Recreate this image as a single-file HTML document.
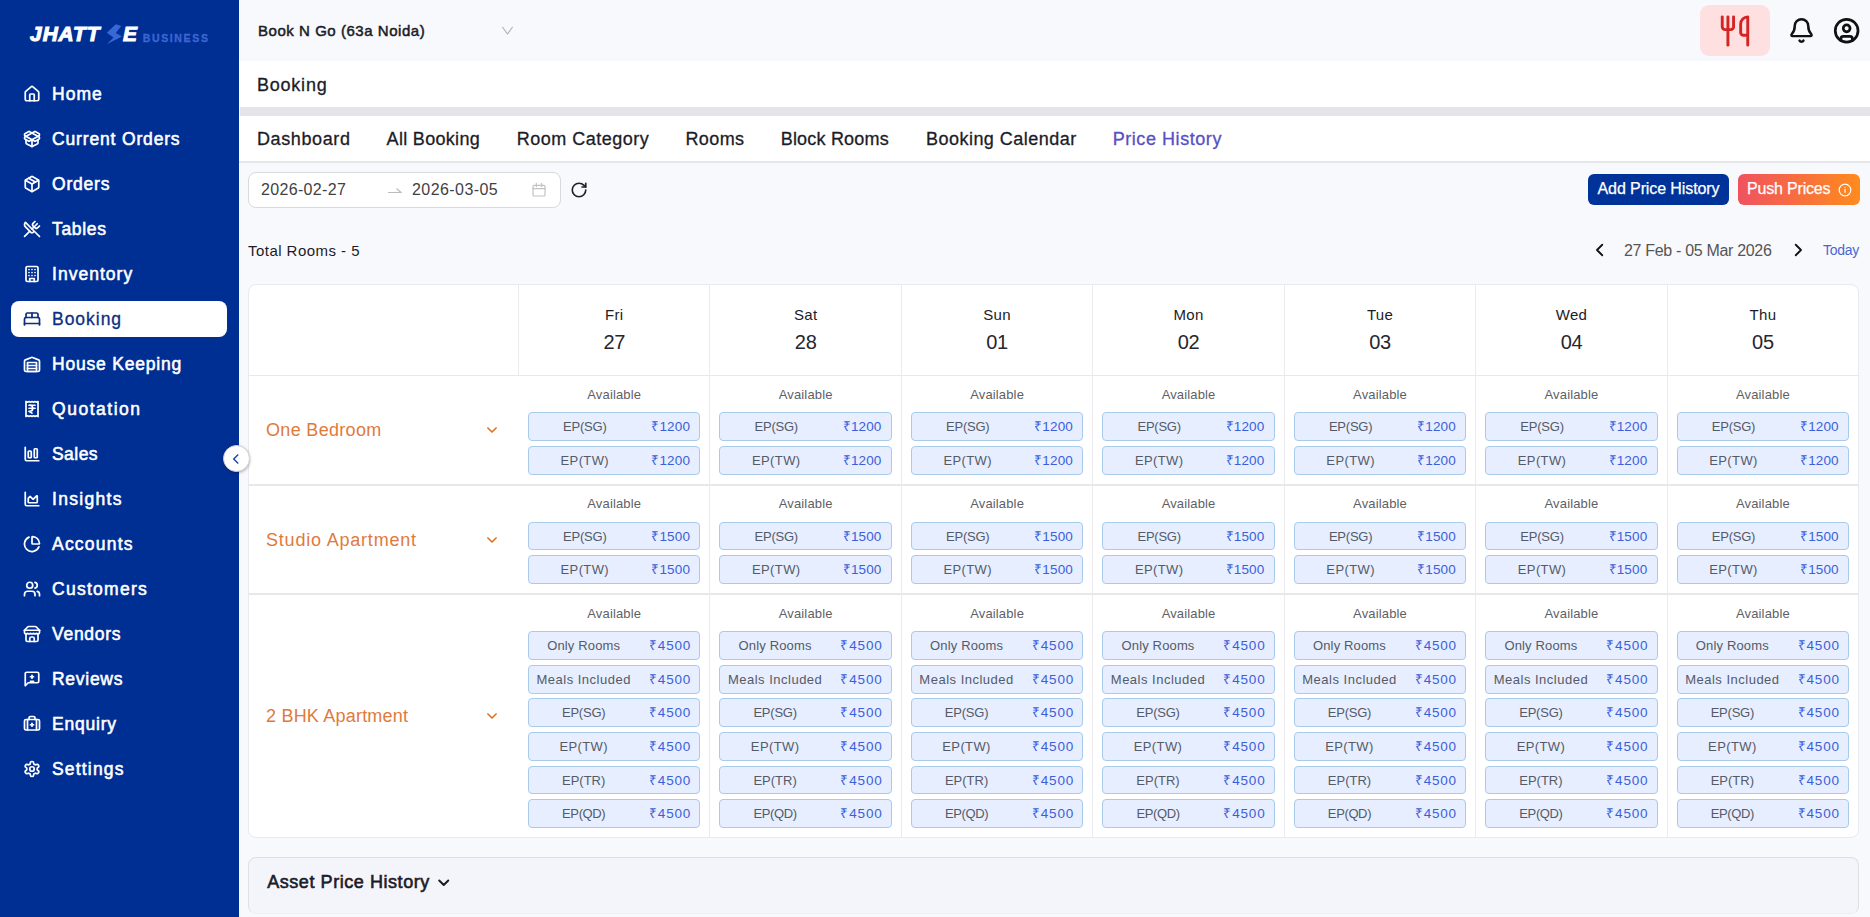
<!DOCTYPE html>
<html lang="en">
<head>
<meta charset="utf-8">
<title>Booking - Price History</title>
<style>
*{box-sizing:border-box;margin:0;padding:0}
html,body{width:1870px;height:917px;overflow:hidden}
body{font-family:"Liberation Sans",sans-serif;background:#f8f9fd;color:#1c1c28;position:relative}
#side{position:absolute;left:0;top:0;width:239px;height:917px;background:#002f94}
#logo{position:absolute;left:30.100px;top:21.700px;height:28px;white-space:nowrap}
#logo .bolt{position:absolute;left:74.900px;top:1.300px}
#logo .e{position:absolute;left:92.900px;top:0}
#logo .j{font-style:italic;font-weight:700;font-size:20.800px;color:#fff;display:inline-block;-webkit-text-stroke:1.100px #fff}
#logo .b{position:absolute;left:112.600px;top:10px;font-weight:700;font-size:10.500px;color:#3c66d4;letter-spacing:1.650px;-webkit-text-stroke:.3px #3c66d4}
.nav{position:absolute;left:11px;width:216px;height:36px;border-radius:8px;color:#fff;font-weight:400;-webkit-text-stroke:.55px #fff;font-size:17.500px;display:flex;align-items:center;padding-left:11.500px}
.nav .ic{flex:none;margin-right:11.500px;position:relative;top:0}
.nav span{position:relative;top:.500px;white-space:nowrap}
.nav.active{background:#fff;color:#0c2e80;-webkit-text-stroke:.3px #0c2e80}
#collapse{position:absolute;left:222.700px;top:445.300px;width:27px;height:27px;border-radius:50%;background:#fff;border:1px solid #d0d0d4;box-shadow:0 1px 3px rgba(0,0,0,.3);z-index:5;display:flex;align-items:center;justify-content:center;color:#1f48b0}
#main{position:absolute;left:239px;top:0;width:1631px;height:917px}
#top{position:absolute;left:0;top:0;width:1631px;height:61px}
#store{position:absolute;left:19px;top:21.500px;font-size:15px;font-weight:400;-webkit-text-stroke:.5px #1c1c28;color:#1c1c28}
#title{position:absolute;left:0;top:61px;width:1631px;height:46px;background:#fff}
#title span{position:absolute;left:18px;top:14px;font-size:18px;color:#1c1c28;-webkit-text-stroke:.3px #1c1c28}
#gbar{position:absolute;left:1px;top:107px;width:1630px;height:9px;background:#e4e5e9}
#tabs{position:absolute;left:0;top:116px;width:1631px;height:47px;background:#fff;border-bottom:2px solid #e6e7eb}
.tab{position:absolute;top:13px;font-size:18px;color:#1c1c28;white-space:nowrap;-webkit-text-stroke:.3px #1c1c28}
.tab.act{color:#5750c4;-webkit-text-stroke:.3px #5750c4}
#dp{position:absolute;left:9px;top:172px;width:313px;height:36px;border:1px solid #d9d9d9;border-radius:8px;background:#fff;font-size:16px;color:#3f3f44}
#dp .d{position:absolute;top:8px}
#dp i{font-style:normal}
.btn{position:absolute;top:174px;height:31px;border-radius:6px;color:#fff;font-size:16px;line-height:30.500px;-webkit-text-stroke:.25px #fff;text-align:center;white-space:nowrap}
#tbl{position:absolute;left:9px;top:284px;width:1611px;height:554px;background:#fff;border:1px solid #e9e9ef;border-radius:8px;overflow:hidden}
.hl{position:absolute;left:0;width:1609px;background:#e8e8eb}
.vl{position:absolute;width:1px;background:#ebebef}
.hd{position:absolute;top:0;width:190.450px;height:90px;text-align:center;color:#1c1c28}
.dn{margin-top:20.700px;font-size:15px;line-height:18px}
.dd{margin-top:6.300px;font-size:20px;line-height:24px;color:#26262f}
.rname{position:absolute;left:0;width:269px;height:24px;line-height:24px;color:#df7a3c;font-size:18px;padding-left:17px;white-space:nowrap}
.rname svg{position:absolute;left:236px;top:5px}
.cell{position:absolute;width:190.450px;height:0}
.av{position:absolute;left:0;width:190.450px;top:-25.300px;text-align:center;font-size:13px;color:#5f5f66;line-height:16px}
.pill{position:absolute;left:9px;width:172.450px;height:28.800px;border:1px solid #a9cbea;border-radius:4px;background:#e6eeff;display:flex;padding-right:9.500px;font-size:13px;line-height:27.800px;white-space:nowrap}
.pl{flex:1;text-align:center;color:#555a67;margin-right:10.700px}
.pr{flex:none;color:#3b5fdb;font-size:13.500px}
#asset{position:absolute;left:9px;top:857px;width:1611px;height:57px;border:1px solid #dfdfe4;border-bottom-color:#eeeff4;border-radius:8px;background:#f4f5fb}
#asset span{position:absolute;left:18.200px;top:14.300px;font-size:18px;font-weight:400;-webkit-text-stroke:.6px #1c1c28;color:#1c1c28}
</style>
</head>
<body>
<div id="side">
<div id="logo"><span class="j" style="letter-spacing:0.97px">JHATT</span><svg class="bolt" width="18" height="22" viewBox="105 23 18 22"><polygon points="115.800,24.200 121.200,26 115.800,33 121.900,36.500 106.800,44.200 113.500,37.600 106.800,32.800" fill="#3868d8"/></svg><span class="j e">E</span><span class="b">BUSINESS</span></div>
<div class="nav" style="top:76px"><svg class="ic" width="18" height="18" viewBox="0 0 24 24" fill="none" stroke="currentColor" stroke-width="2.3" stroke-linecap="round" stroke-linejoin="round"><path d="M15 21v-8a1 1 0 0 0-1-1h-4a1 1 0 0 0-1 1v8"/><path d="M3 10a2 2 0 0 1 .709-1.528l7-5.999a2 2 0 0 1 2.582 0l7 5.999A2 2 0 0 1 21 10v9a2 2 0 0 1-2 2H5a2 2 0 0 1-2-2z"/></svg><span style="letter-spacing:1.02px">Home</span></div>
<div class="nav" style="top:121px"><svg class="ic" width="18" height="18" viewBox="0 0 24 24" fill="none" stroke="currentColor" stroke-width="2.3" stroke-linecap="round" stroke-linejoin="round"><path d="M12 22v-9"/><path d="M15.170 2.210a1.670 1.670 0 0 1 1.630 0L21 4.570a1.930 1.930 0 0 1 0 3.360L8.820 14.790a1.655 1.655 0 0 1-1.640 0L3 12.430a1.930 1.930 0 0 1 0-3.360z"/><path d="M20 13v3.870a2.060 2.060 0 0 1-1.110 1.830l-6 3.080a1.930 1.930 0 0 1-1.780 0l-6-3.080A2.060 2.060 0 0 1 4 16.870V13"/><path d="M21 12.430a1.930 1.930 0 0 0 0-3.360L8.830 2.200a1.640 1.640 0 0 0-1.630 0L3 4.570a1.930 1.930 0 0 0 0 3.360l12.180 6.860a1.636 1.636 0 0 0 1.630 0z"/></svg><span style="letter-spacing:0.84px">Current Orders</span></div>
<div class="nav" style="top:166px"><svg class="ic" width="18" height="18" viewBox="0 0 24 24" fill="none" stroke="currentColor" stroke-width="2.3" stroke-linecap="round" stroke-linejoin="round"><path d="M21 8a2 2 0 0 0-1-1.730l-7-4a2 2 0 0 0-2 0l-7 4A2 2 0 0 0 3 8v8a2 2 0 0 0 1 1.730l7 4a2 2 0 0 0 2 0l7-4A2 2 0 0 0 21 16Z"/><path d="m3.3 7 8.700 5 8.700-5"/><path d="M12 22V12"/><path d="m7.500 4.270 9 5.150"/></svg><span style="letter-spacing:0.79px">Orders</span></div>
<div class="nav" style="top:211px"><svg class="ic" width="18" height="18" viewBox="0 0 24 24" fill="none" stroke="currentColor" stroke-width="2.3" stroke-linecap="round" stroke-linejoin="round"><path d="m16 2-2.300 2.300a3 3 0 0 0 0 4.200l1.800 1.800a3 3 0 0 0 4.200 0L22 8"/><path d="M15 15 3.300 3.300a4.200 4.200 0 0 0 0 6l7.300 7.300c.700.700 2 .700 2.800 0L15 15Zm0 0 7 7"/><path d="m2.100 21.800 6.400-6.300"/><path d="m19 5-7 7"/></svg><span style="letter-spacing:0.67px">Tables</span></div>
<div class="nav" style="top:256px"><svg class="ic" width="18" height="18" viewBox="0 0 24 24" fill="none" stroke="currentColor" stroke-width="2.3" stroke-linecap="round" stroke-linejoin="round"><rect x="4" y="2" width="16" height="20" rx="2"/><path d="M9 22v-4h6v4"/><path d="M8 6h.01M16 6h.01M12 6h.01M12 10h.01M12 14h.01M16 10h.01M16 14h.01M8 10h.01M8 14h.01"/></svg><span style="letter-spacing:1.03px">Inventory</span></div>
<div class="nav active" style="top:301px"><svg class="ic" width="18" height="18" viewBox="0 0 24 24" fill="none" stroke="currentColor" stroke-width="2.3" stroke-linecap="round" stroke-linejoin="round"><path d="M2 20v-8a2 2 0 0 1 2-2h16a2 2 0 0 1 2 2v8"/><path d="M4 10V6a2 2 0 0 1 2-2h12a2 2 0 0 1 2 2v4"/><path d="M12 4v6"/><path d="M2 18h20"/></svg><span style="letter-spacing:0.97px">Booking</span></div>
<div class="nav" style="top:346px"><svg class="ic" width="18" height="18" viewBox="0 0 24 24" fill="none" stroke="currentColor" stroke-width="2.3" stroke-linecap="round" stroke-linejoin="round"><path d="M22 8.350V20a2 2 0 0 1-2 2H4a2 2 0 0 1-2-2V8.350A2 2 0 0 1 3.260 6.500l8-3.200a2 2 0 0 1 1.480 0l8 3.200A2 2 0 0 1 22 8.350Z"/><path d="M6 18h12"/><path d="M6 14h12"/><rect x="6" y="10" width="12" height="12"/></svg><span style="letter-spacing:0.79px">House Keeping</span></div>
<div class="nav" style="top:391px"><svg class="ic" width="18" height="18" viewBox="0 0 24 24" fill="none" stroke="currentColor" stroke-width="2.3" stroke-linecap="round" stroke-linejoin="round"><path d="M4 2v20l2-1 2 1 2-1 2 1 2-1 2 1 2-1 2 1V2l-2 1-2-1-2 1-2-1-2 1-2-1-2 1Z"/><path d="M8 7h8"/><path d="M12 17.500 8 15h1a4 4 0 0 0 0-8"/><path d="M8 11h8"/></svg><span style="letter-spacing:1.52px">Quotation</span></div>
<div class="nav" style="top:436px"><svg class="ic" width="18" height="18" viewBox="0 0 24 24" fill="none" stroke="currentColor" stroke-width="2.3" stroke-linecap="round" stroke-linejoin="round"><path d="M3 3v16a2 2 0 0 0 2 2h16"/><rect x="15" y="5" width="4" height="12" rx="1"/><rect x="7" y="8" width="4" height="9" rx="1"/></svg><span style="letter-spacing:0.45px">Sales</span></div>
<div class="nav" style="top:481px"><svg class="ic" width="18" height="18" viewBox="0 0 24 24" fill="none" stroke="currentColor" stroke-width="2.3" stroke-linecap="round" stroke-linejoin="round"><path d="M3 3v16a2 2 0 0 0 2 2h16"/><path d="M7 11.200a.5.500 0 0 1 .150-.350l2-2a.5.500 0 0 1 .700 0l3.300 3.300a.5.500 0 0 0 .700 0l4.300-4.300a.5.500 0 0 1 .850.350V16a1 1 0 0 1-1 1H8a1 1 0 0 1-1-1z"/></svg><span style="letter-spacing:1.31px">Insights</span></div>
<div class="nav" style="top:526px"><svg class="ic" width="18" height="18" viewBox="0 0 24 24" fill="none" stroke="currentColor" stroke-width="2.3" stroke-linecap="round" stroke-linejoin="round"><path d="M21 12c.550 0 1-.450.950-1A10 10 0 0 0 13 2.050c-.550-.050-1 .400-1 .950v8a1 1 0 0 0 1 1z"/><path d="M21.210 15.890A10 10 0 1 1 8 2.830"/></svg><span style="letter-spacing:1.21px">Accounts</span></div>
<div class="nav" style="top:571px"><svg class="ic" width="18" height="18" viewBox="0 0 24 24" fill="none" stroke="currentColor" stroke-width="2.3" stroke-linecap="round" stroke-linejoin="round"><path d="M16 21v-2a4 4 0 0 0-4-4H6a4 4 0 0 0-4 4v2"/><circle cx="9" cy="7" r="4"/><path d="M22 21v-2a4 4 0 0 0-3-3.870"/><path d="M16 3.130a4 4 0 0 1 0 7.750"/></svg><span style="letter-spacing:1.28px">Customers</span></div>
<div class="nav" style="top:616px"><svg class="ic" width="18" height="18" viewBox="0 0 24 24" fill="none" stroke="currentColor" stroke-width="2.3" stroke-linecap="round" stroke-linejoin="round"><path d="m2 7 4.410-4.410A2 2 0 0 1 7.830 2h8.340a2 2 0 0 1 1.420.590L22 7"/><path d="M4 12v8a2 2 0 0 0 2 2h12a2 2 0 0 0 2-2v-8"/><path d="M15 22v-4a2 2 0 0 0-2-2h-2a2 2 0 0 0-2 2v4"/><path d="M2 7h20"/><path d="M22 7v3a2 2 0 0 1-2 2a2.700 2.700 0 0 1-1.590-.630.700.700 0 0 0-.820 0A2.700 2.700 0 0 1 16 12a2.700 2.700 0 0 1-1.590-.630.700.700 0 0 0-.820 0A2.700 2.700 0 0 1 12 12a2.700 2.700 0 0 1-1.590-.630.700.700 0 0 0-.820 0A2.700 2.700 0 0 1 8 12a2.700 2.700 0 0 1-1.590-.630.700.700 0 0 0-.820 0A2.700 2.700 0 0 1 4 12a2 2 0 0 1-2-2V7"/></svg><span style="letter-spacing:0.72px">Vendors</span></div>
<div class="nav" style="top:661px"><svg class="ic" width="18" height="18" viewBox="0 0 24 24" fill="none" stroke="currentColor" stroke-width="2.3" stroke-linecap="round" stroke-linejoin="round"><path d="M21 15a2 2 0 0 1-2 2H7l-4 4V5a2 2 0 0 1 2-2h14a2 2 0 0 1 2 2z"/><path d="M10 15h4"/><path d="M10 9h4"/><path d="M12 7v4"/></svg><span style="letter-spacing:0.72px">Reviews</span></div>
<div class="nav" style="top:706px"><svg class="ic" width="18" height="18" viewBox="0 0 24 24" fill="none" stroke="currentColor" stroke-width="2.3" stroke-linecap="round" stroke-linejoin="round"><path d="M12 11v4"/><path d="M14 13h-4"/><path d="M16 6V4a2 2 0 0 0-2-2h-4a2 2 0 0 0-2 2v2"/><path d="M18 6v14"/><path d="M6 6v14"/><rect width="20" height="14" x="2" y="6" rx="2"/></svg><span style="letter-spacing:0.78px">Enquiry</span></div>
<div class="nav" style="top:751px"><svg class="ic" width="18" height="18" viewBox="0 0 24 24" fill="none" stroke="currentColor" stroke-width="2.3" stroke-linecap="round" stroke-linejoin="round"><path d="M12.220 2h-.440a2 2 0 0 0-2 2v.180a2 2 0 0 1-1 1.730l-.430.250a2 2 0 0 1-2 0l-.150-.080a2 2 0 0 0-2.730.730l-.220.380a2 2 0 0 0 .730 2.730l.150.100a2 2 0 0 1 1 1.720v.510a2 2 0 0 1-1 1.740l-.150.090a2 2 0 0 0-.730 2.730l.220.380a2 2 0 0 0 2.730.730l.150-.080a2 2 0 0 1 2 0l.430.250a2 2 0 0 1 1 1.730V20a2 2 0 0 0 2 2h.440a2 2 0 0 0 2-2v-.180a2 2 0 0 1 1-1.730l.430-.250a2 2 0 0 1 2 0l.150.080a2 2 0 0 0 2.730-.730l.220-.390a2 2 0 0 0-.730-2.730l-.150-.080a2 2 0 0 1-1-1.740v-.500a2 2 0 0 1 1-1.740l.150-.090a2 2 0 0 0 .730-2.730l-.220-.380a2 2 0 0 0-2.730-.730l-.150.080a2 2 0 0 1-2 0l-.430-.250a2 2 0 0 1-1-1.730V4a2 2 0 0 0-2-2z"/><circle cx="12" cy="12" r="3"/></svg><span style="letter-spacing:1.18px">Settings</span></div>

</div>
<div id="collapse"><svg width="14" height="14" viewBox="0 0 24 24" fill="none" stroke="currentColor" stroke-width="2.6" stroke-linecap="round" stroke-linejoin="round"><path d="m15 5-7 7 7 7"/></svg></div>
<div id="main">
<div id="top">
<div id="store" style="letter-spacing:0.54px">Book N Go (63a Noida)</div>
<svg style="position:absolute;left:262px;top:24px" width="13" height="13" viewBox="0 0 24 24" fill="none" stroke="#adadb2" stroke-width="2" stroke-linecap="round" stroke-linejoin="round"><path d="m3 6 9 12.500 9-12.500"/></svg>
<div style="position:absolute;left:1461px;top:5.400px;width:70px;height:50.400px;border-radius:9px;background:#ffe0e0"></div>
<svg style="position:absolute;left:1479px;top:14px" width="34" height="34" viewBox="0 0 24 24" fill="none" stroke="#d62323" stroke-width="2.050" stroke-linecap="round" stroke-linejoin="round"><path d="M3 2v7c0 1.100.9 2 2 2h4a2 2 0 0 0 2-2V2"/><path d="M7 2v20"/><path d="M21 15V2a5 5 0 0 0-5 5v6c0 1.100.9 2 2 2h3Zm0 0v7"/></svg>
<svg style="position:absolute;left:1548.800px;top:17.200px" width="27" height="27" viewBox="0 0 24 24" fill="none" stroke="#111" stroke-width="2.200" stroke-linecap="round" stroke-linejoin="round"><path d="M10.268 21a2 2 0 0 0 3.464 0"/><path d="M3.262 15.326A1 1 0 0 0 4 17h16a1 1 0 0 0 .74-1.673C19.410 13.956 18 12.499 18 8A6 6 0 0 0 6 8c0 4.499-1.411 5.956-2.738 7.326"/></svg>
<svg style="position:absolute;left:1594px;top:16.900px" width="27.300" height="27.300" viewBox="0 0 24 24" fill="none" stroke="#111" stroke-width="2.400" stroke-linecap="round" stroke-linejoin="round"><circle cx="12" cy="12" r="10"/><circle cx="12" cy="10" r="3"/><path d="M7 20.662V19a2 2 0 0 1 2-2h6a2 2 0 0 1 2 2v1.662"/></svg>
</div>
<div id="title"><span style="letter-spacing:0.77px">Booking</span></div>
<div id="gbar"></div>
<div id="tabs"><div class="tab" style="left:18px;letter-spacing:0.61px">Dashboard</div><div class="tab" style="left:147.60000000000002px;letter-spacing:0.31px">All Booking</div><div class="tab" style="left:277.79999999999995px;letter-spacing:0.49px">Room Category</div><div class="tab" style="left:446.4px;letter-spacing:0.41px">Rooms</div><div class="tab" style="left:541.7px;letter-spacing:0.20px">Block Rooms</div><div class="tab" style="left:687px;letter-spacing:0.47px">Booking Calendar</div><div class="tab act" style="left:873.7px;letter-spacing:0.56px">Price History</div></div>
<div id="dp"><span class="d" style="left:12px"><i style="letter-spacing:0.34px">2026-02-27</i></span><svg style="position:absolute;left:138px;top:11px" width="15" height="12" viewBox="0 0 15 12" fill="none" stroke="#bdbdbd" stroke-width="1.200"><path d="M1 8.500h13L9.500 4.500"/></svg><span class="d" style="left:163px"><i style="letter-spacing:0.43px">2026-03-05</i></span>
<svg style="position:absolute;left:282px;top:9px" width="16" height="16" viewBox="0 0 24 24" fill="none" stroke="#c2c2c6" stroke-width="1.8" stroke-linecap="round" stroke-linejoin="round"><rect x="3" y="5" width="18" height="16" rx="1.500"/><path d="M3 10h18M8 2v5M16 2v5"/></svg>
</div>
<svg style="position:absolute;left:331px;top:181px" width="18" height="18" viewBox="0 0 24 24" fill="none" stroke="#222" stroke-width="2.2" stroke-linecap="round" stroke-linejoin="round"><path d="M21 12a9 9 0 1 1-9-9c2.520 0 4.930 1 6.740 2.740L21 8"/><path d="M21 3v5h-5"/></svg>
<div class="btn" style="left:1349px;width:141px;background:#003399"><span id="aph" style="letter-spacing:-0.10px">Add Price History</span></div>
<div class="btn" style="left:1499px;width:122px;background:linear-gradient(90deg,#f0525f,#ff8b1e);text-align:left;padding-left:9px"><span id="pp" style="letter-spacing:-0.18px">Push Prices</span>
<svg style="position:absolute;left:100px;top:8.500px" width="14" height="14" viewBox="0 0 24 24" fill="none" stroke="#fff" stroke-width="2" stroke-linecap="round" stroke-linejoin="round"><circle cx="12" cy="12" r="10"/><path d="M12 16v-5"/><path d="M12 7.500h.01"/></svg></div>
<div id="tot" style="position:absolute;left:9px;top:241.600px;font-size:15px;color:#1c1c28;letter-spacing:0.46px">Total Rooms - 5</div>
<svg style="position:absolute;left:1351.800px;top:241.300px" width="18" height="18" viewBox="0 0 24 24" fill="none" stroke="#111" stroke-width="2.400" stroke-linecap="round" stroke-linejoin="round"><path d="m15 5-7 7 7 7"/></svg>
<div id="rng" style="position:absolute;left:1385px;top:242px;font-size:16px;color:#555;letter-spacing:-0.32px">27 Feb - 05 Mar 2026</div>
<svg style="position:absolute;left:1550px;top:241px" width="18" height="18" viewBox="0 0 24 24" fill="none" stroke="#111" stroke-width="2.400" stroke-linecap="round" stroke-linejoin="round"><path d="m9 5 7 7-7 7"/></svg>
<div id="today" style="position:absolute;left:1584px;top:242px;font-size:14px;color:#4a66d4;letter-spacing:-0.29px">Today</div>
<div id="tbl">
<div class="hl" style="top:90px;height:1px"></div><div class="hl" style="top:199px;height:2px"></div><div class="hl" style="top:308px;height:2px"></div>
<div class="vl" style="left:269px;top:0;height:90px"></div><div class="vl" style="left:460.45px;top:0;height:553px"></div><div class="vl" style="left:651.9px;top:0;height:553px"></div><div class="vl" style="left:843.35px;top:0;height:553px"></div><div class="vl" style="left:1034.8px;top:0;height:553px"></div><div class="vl" style="left:1226.25px;top:0;height:553px"></div><div class="vl" style="left:1417.7px;top:0;height:553px"></div>
<div class="hd" style="left:270px"><div class="dn" style="letter-spacing:0.30px">Fri</div><div class="dd" style="letter-spacing:-0.30px">27</div></div>
<div class="hd" style="left:461.45px"><div class="dn" style="letter-spacing:0.30px">Sat</div><div class="dd" style="letter-spacing:-0.30px">28</div></div>
<div class="hd" style="left:652.9px"><div class="dn" style="letter-spacing:0.30px">Sun</div><div class="dd" style="letter-spacing:-0.30px">01</div></div>
<div class="hd" style="left:844.35px"><div class="dn" style="letter-spacing:0.30px">Mon</div><div class="dd" style="letter-spacing:-0.30px">02</div></div>
<div class="hd" style="left:1035.8px"><div class="dn" style="letter-spacing:0.30px">Tue</div><div class="dd" style="letter-spacing:-0.30px">03</div></div>
<div class="hd" style="left:1227.25px"><div class="dn" style="letter-spacing:0.30px">Wed</div><div class="dd" style="letter-spacing:-0.30px">04</div></div>
<div class="hd" style="left:1418.7px"><div class="dn" style="letter-spacing:0.30px">Thu</div><div class="dd" style="letter-spacing:-0.30px">05</div></div>
<div class="rname" style="top:132.5px"><span style="letter-spacing:0.32px">One Bedroom</span><svg width="14" height="14" viewBox="0 0 24 24" fill="none" stroke="#e07224" stroke-width="2.800" stroke-linecap="round" stroke-linejoin="round"><path d="m5 8.500 7 7 7-7"/></svg></div>
<div class="cell" style="left:270px;top:127.2px"><div class="av" style="letter-spacing:0.15px">Available</div><div class="pill" style="top:0px"><span class="pl" style="letter-spacing:-0.23px">EP(SG)</span><span class="pr" style="letter-spacing:0.14px;margin-right:-0.14px">₹1200</span></div><div class="pill" style="top:33.6px"><span class="pl" style="letter-spacing:0.38px">EP(TW)</span><span class="pr" style="letter-spacing:0.14px;margin-right:-0.14px">₹1200</span></div></div>
<div class="cell" style="left:461.45px;top:127.2px"><div class="av" style="letter-spacing:0.15px">Available</div><div class="pill" style="top:0px"><span class="pl" style="letter-spacing:-0.23px">EP(SG)</span><span class="pr" style="letter-spacing:0.14px;margin-right:-0.14px">₹1200</span></div><div class="pill" style="top:33.6px"><span class="pl" style="letter-spacing:0.38px">EP(TW)</span><span class="pr" style="letter-spacing:0.14px;margin-right:-0.14px">₹1200</span></div></div>
<div class="cell" style="left:652.9px;top:127.2px"><div class="av" style="letter-spacing:0.15px">Available</div><div class="pill" style="top:0px"><span class="pl" style="letter-spacing:-0.23px">EP(SG)</span><span class="pr" style="letter-spacing:0.14px;margin-right:-0.14px">₹1200</span></div><div class="pill" style="top:33.6px"><span class="pl" style="letter-spacing:0.38px">EP(TW)</span><span class="pr" style="letter-spacing:0.14px;margin-right:-0.14px">₹1200</span></div></div>
<div class="cell" style="left:844.35px;top:127.2px"><div class="av" style="letter-spacing:0.15px">Available</div><div class="pill" style="top:0px"><span class="pl" style="letter-spacing:-0.23px">EP(SG)</span><span class="pr" style="letter-spacing:0.14px;margin-right:-0.14px">₹1200</span></div><div class="pill" style="top:33.6px"><span class="pl" style="letter-spacing:0.38px">EP(TW)</span><span class="pr" style="letter-spacing:0.14px;margin-right:-0.14px">₹1200</span></div></div>
<div class="cell" style="left:1035.8px;top:127.2px"><div class="av" style="letter-spacing:0.15px">Available</div><div class="pill" style="top:0px"><span class="pl" style="letter-spacing:-0.23px">EP(SG)</span><span class="pr" style="letter-spacing:0.14px;margin-right:-0.14px">₹1200</span></div><div class="pill" style="top:33.6px"><span class="pl" style="letter-spacing:0.38px">EP(TW)</span><span class="pr" style="letter-spacing:0.14px;margin-right:-0.14px">₹1200</span></div></div>
<div class="cell" style="left:1227.25px;top:127.2px"><div class="av" style="letter-spacing:0.15px">Available</div><div class="pill" style="top:0px"><span class="pl" style="letter-spacing:-0.23px">EP(SG)</span><span class="pr" style="letter-spacing:0.14px;margin-right:-0.14px">₹1200</span></div><div class="pill" style="top:33.6px"><span class="pl" style="letter-spacing:0.38px">EP(TW)</span><span class="pr" style="letter-spacing:0.14px;margin-right:-0.14px">₹1200</span></div></div>
<div class="cell" style="left:1418.7px;top:127.2px"><div class="av" style="letter-spacing:0.15px">Available</div><div class="pill" style="top:0px"><span class="pl" style="letter-spacing:-0.23px">EP(SG)</span><span class="pr" style="letter-spacing:0.14px;margin-right:-0.14px">₹1200</span></div><div class="pill" style="top:33.6px"><span class="pl" style="letter-spacing:0.38px">EP(TW)</span><span class="pr" style="letter-spacing:0.14px;margin-right:-0.14px">₹1200</span></div></div>
<div class="rname" style="top:242.8px"><span style="letter-spacing:0.80px">Studio Apartment</span><svg width="14" height="14" viewBox="0 0 24 24" fill="none" stroke="#e07224" stroke-width="2.800" stroke-linecap="round" stroke-linejoin="round"><path d="m5 8.500 7 7 7-7"/></svg></div>
<div class="cell" style="left:270px;top:236.7px"><div class="av" style="letter-spacing:0.15px">Available</div><div class="pill" style="top:0px"><span class="pl" style="letter-spacing:-0.23px">EP(SG)</span><span class="pr" style="letter-spacing:0.14px;margin-right:-0.14px">₹1500</span></div><div class="pill" style="top:33.6px"><span class="pl" style="letter-spacing:0.38px">EP(TW)</span><span class="pr" style="letter-spacing:0.14px;margin-right:-0.14px">₹1500</span></div></div>
<div class="cell" style="left:461.45px;top:236.7px"><div class="av" style="letter-spacing:0.15px">Available</div><div class="pill" style="top:0px"><span class="pl" style="letter-spacing:-0.23px">EP(SG)</span><span class="pr" style="letter-spacing:0.14px;margin-right:-0.14px">₹1500</span></div><div class="pill" style="top:33.6px"><span class="pl" style="letter-spacing:0.38px">EP(TW)</span><span class="pr" style="letter-spacing:0.14px;margin-right:-0.14px">₹1500</span></div></div>
<div class="cell" style="left:652.9px;top:236.7px"><div class="av" style="letter-spacing:0.15px">Available</div><div class="pill" style="top:0px"><span class="pl" style="letter-spacing:-0.23px">EP(SG)</span><span class="pr" style="letter-spacing:0.14px;margin-right:-0.14px">₹1500</span></div><div class="pill" style="top:33.6px"><span class="pl" style="letter-spacing:0.38px">EP(TW)</span><span class="pr" style="letter-spacing:0.14px;margin-right:-0.14px">₹1500</span></div></div>
<div class="cell" style="left:844.35px;top:236.7px"><div class="av" style="letter-spacing:0.15px">Available</div><div class="pill" style="top:0px"><span class="pl" style="letter-spacing:-0.23px">EP(SG)</span><span class="pr" style="letter-spacing:0.14px;margin-right:-0.14px">₹1500</span></div><div class="pill" style="top:33.6px"><span class="pl" style="letter-spacing:0.38px">EP(TW)</span><span class="pr" style="letter-spacing:0.14px;margin-right:-0.14px">₹1500</span></div></div>
<div class="cell" style="left:1035.8px;top:236.7px"><div class="av" style="letter-spacing:0.15px">Available</div><div class="pill" style="top:0px"><span class="pl" style="letter-spacing:-0.23px">EP(SG)</span><span class="pr" style="letter-spacing:0.14px;margin-right:-0.14px">₹1500</span></div><div class="pill" style="top:33.6px"><span class="pl" style="letter-spacing:0.38px">EP(TW)</span><span class="pr" style="letter-spacing:0.14px;margin-right:-0.14px">₹1500</span></div></div>
<div class="cell" style="left:1227.25px;top:236.7px"><div class="av" style="letter-spacing:0.15px">Available</div><div class="pill" style="top:0px"><span class="pl" style="letter-spacing:-0.23px">EP(SG)</span><span class="pr" style="letter-spacing:0.14px;margin-right:-0.14px">₹1500</span></div><div class="pill" style="top:33.6px"><span class="pl" style="letter-spacing:0.38px">EP(TW)</span><span class="pr" style="letter-spacing:0.14px;margin-right:-0.14px">₹1500</span></div></div>
<div class="cell" style="left:1418.7px;top:236.7px"><div class="av" style="letter-spacing:0.15px">Available</div><div class="pill" style="top:0px"><span class="pl" style="letter-spacing:-0.23px">EP(SG)</span><span class="pr" style="letter-spacing:0.14px;margin-right:-0.14px">₹1500</span></div><div class="pill" style="top:33.6px"><span class="pl" style="letter-spacing:0.38px">EP(TW)</span><span class="pr" style="letter-spacing:0.14px;margin-right:-0.14px">₹1500</span></div></div>
<div class="rname" style="top:418.5px"><span style="letter-spacing:0.21px">2 BHK Apartment</span><svg width="14" height="14" viewBox="0 0 24 24" fill="none" stroke="#e07224" stroke-width="2.800" stroke-linecap="round" stroke-linejoin="round"><path d="m5 8.500 7 7 7-7"/></svg></div>
<div class="cell" style="left:270px;top:346.2px"><div class="av" style="letter-spacing:0.15px">Available</div><div class="pill" style="top:0px"><span class="pl" style="letter-spacing:0.15px">Only Rooms</span><span class="pr" style="letter-spacing:0.81px;margin-right:-1.21px">₹4500</span></div><div class="pill" style="top:33.6px"><span class="pl" style="letter-spacing:0.50px">Meals Included</span><span class="pr" style="letter-spacing:0.81px;margin-right:-1.21px">₹4500</span></div><div class="pill" style="top:67.2px"><span class="pl" style="letter-spacing:-0.23px">EP(SG)</span><span class="pr" style="letter-spacing:0.81px;margin-right:-1.21px">₹4500</span></div><div class="pill" style="top:100.8px"><span class="pl" style="letter-spacing:0.38px">EP(TW)</span><span class="pr" style="letter-spacing:0.81px;margin-right:-1.21px">₹4500</span></div><div class="pill" style="top:134.4px"><span class="pl">EP(TR)</span><span class="pr" style="letter-spacing:0.81px;margin-right:-1.21px">₹4500</span></div><div class="pill" style="top:168px"><span class="pl" style="letter-spacing:-0.38px">EP(QD)</span><span class="pr" style="letter-spacing:0.81px;margin-right:-1.21px">₹4500</span></div></div>
<div class="cell" style="left:461.45px;top:346.2px"><div class="av" style="letter-spacing:0.15px">Available</div><div class="pill" style="top:0px"><span class="pl" style="letter-spacing:0.15px">Only Rooms</span><span class="pr" style="letter-spacing:0.81px;margin-right:-1.21px">₹4500</span></div><div class="pill" style="top:33.6px"><span class="pl" style="letter-spacing:0.50px">Meals Included</span><span class="pr" style="letter-spacing:0.81px;margin-right:-1.21px">₹4500</span></div><div class="pill" style="top:67.2px"><span class="pl" style="letter-spacing:-0.23px">EP(SG)</span><span class="pr" style="letter-spacing:0.81px;margin-right:-1.21px">₹4500</span></div><div class="pill" style="top:100.8px"><span class="pl" style="letter-spacing:0.38px">EP(TW)</span><span class="pr" style="letter-spacing:0.81px;margin-right:-1.21px">₹4500</span></div><div class="pill" style="top:134.4px"><span class="pl">EP(TR)</span><span class="pr" style="letter-spacing:0.81px;margin-right:-1.21px">₹4500</span></div><div class="pill" style="top:168px"><span class="pl" style="letter-spacing:-0.38px">EP(QD)</span><span class="pr" style="letter-spacing:0.81px;margin-right:-1.21px">₹4500</span></div></div>
<div class="cell" style="left:652.9px;top:346.2px"><div class="av" style="letter-spacing:0.15px">Available</div><div class="pill" style="top:0px"><span class="pl" style="letter-spacing:0.15px">Only Rooms</span><span class="pr" style="letter-spacing:0.81px;margin-right:-1.21px">₹4500</span></div><div class="pill" style="top:33.6px"><span class="pl" style="letter-spacing:0.50px">Meals Included</span><span class="pr" style="letter-spacing:0.81px;margin-right:-1.21px">₹4500</span></div><div class="pill" style="top:67.2px"><span class="pl" style="letter-spacing:-0.23px">EP(SG)</span><span class="pr" style="letter-spacing:0.81px;margin-right:-1.21px">₹4500</span></div><div class="pill" style="top:100.8px"><span class="pl" style="letter-spacing:0.38px">EP(TW)</span><span class="pr" style="letter-spacing:0.81px;margin-right:-1.21px">₹4500</span></div><div class="pill" style="top:134.4px"><span class="pl">EP(TR)</span><span class="pr" style="letter-spacing:0.81px;margin-right:-1.21px">₹4500</span></div><div class="pill" style="top:168px"><span class="pl" style="letter-spacing:-0.38px">EP(QD)</span><span class="pr" style="letter-spacing:0.81px;margin-right:-1.21px">₹4500</span></div></div>
<div class="cell" style="left:844.35px;top:346.2px"><div class="av" style="letter-spacing:0.15px">Available</div><div class="pill" style="top:0px"><span class="pl" style="letter-spacing:0.15px">Only Rooms</span><span class="pr" style="letter-spacing:0.81px;margin-right:-1.21px">₹4500</span></div><div class="pill" style="top:33.6px"><span class="pl" style="letter-spacing:0.50px">Meals Included</span><span class="pr" style="letter-spacing:0.81px;margin-right:-1.21px">₹4500</span></div><div class="pill" style="top:67.2px"><span class="pl" style="letter-spacing:-0.23px">EP(SG)</span><span class="pr" style="letter-spacing:0.81px;margin-right:-1.21px">₹4500</span></div><div class="pill" style="top:100.8px"><span class="pl" style="letter-spacing:0.38px">EP(TW)</span><span class="pr" style="letter-spacing:0.81px;margin-right:-1.21px">₹4500</span></div><div class="pill" style="top:134.4px"><span class="pl">EP(TR)</span><span class="pr" style="letter-spacing:0.81px;margin-right:-1.21px">₹4500</span></div><div class="pill" style="top:168px"><span class="pl" style="letter-spacing:-0.38px">EP(QD)</span><span class="pr" style="letter-spacing:0.81px;margin-right:-1.21px">₹4500</span></div></div>
<div class="cell" style="left:1035.8px;top:346.2px"><div class="av" style="letter-spacing:0.15px">Available</div><div class="pill" style="top:0px"><span class="pl" style="letter-spacing:0.15px">Only Rooms</span><span class="pr" style="letter-spacing:0.81px;margin-right:-1.21px">₹4500</span></div><div class="pill" style="top:33.6px"><span class="pl" style="letter-spacing:0.50px">Meals Included</span><span class="pr" style="letter-spacing:0.81px;margin-right:-1.21px">₹4500</span></div><div class="pill" style="top:67.2px"><span class="pl" style="letter-spacing:-0.23px">EP(SG)</span><span class="pr" style="letter-spacing:0.81px;margin-right:-1.21px">₹4500</span></div><div class="pill" style="top:100.8px"><span class="pl" style="letter-spacing:0.38px">EP(TW)</span><span class="pr" style="letter-spacing:0.81px;margin-right:-1.21px">₹4500</span></div><div class="pill" style="top:134.4px"><span class="pl">EP(TR)</span><span class="pr" style="letter-spacing:0.81px;margin-right:-1.21px">₹4500</span></div><div class="pill" style="top:168px"><span class="pl" style="letter-spacing:-0.38px">EP(QD)</span><span class="pr" style="letter-spacing:0.81px;margin-right:-1.21px">₹4500</span></div></div>
<div class="cell" style="left:1227.25px;top:346.2px"><div class="av" style="letter-spacing:0.15px">Available</div><div class="pill" style="top:0px"><span class="pl" style="letter-spacing:0.15px">Only Rooms</span><span class="pr" style="letter-spacing:0.81px;margin-right:-1.21px">₹4500</span></div><div class="pill" style="top:33.6px"><span class="pl" style="letter-spacing:0.50px">Meals Included</span><span class="pr" style="letter-spacing:0.81px;margin-right:-1.21px">₹4500</span></div><div class="pill" style="top:67.2px"><span class="pl" style="letter-spacing:-0.23px">EP(SG)</span><span class="pr" style="letter-spacing:0.81px;margin-right:-1.21px">₹4500</span></div><div class="pill" style="top:100.8px"><span class="pl" style="letter-spacing:0.38px">EP(TW)</span><span class="pr" style="letter-spacing:0.81px;margin-right:-1.21px">₹4500</span></div><div class="pill" style="top:134.4px"><span class="pl">EP(TR)</span><span class="pr" style="letter-spacing:0.81px;margin-right:-1.21px">₹4500</span></div><div class="pill" style="top:168px"><span class="pl" style="letter-spacing:-0.38px">EP(QD)</span><span class="pr" style="letter-spacing:0.81px;margin-right:-1.21px">₹4500</span></div></div>
<div class="cell" style="left:1418.7px;top:346.2px"><div class="av" style="letter-spacing:0.15px">Available</div><div class="pill" style="top:0px"><span class="pl" style="letter-spacing:0.15px">Only Rooms</span><span class="pr" style="letter-spacing:0.81px;margin-right:-1.21px">₹4500</span></div><div class="pill" style="top:33.6px"><span class="pl" style="letter-spacing:0.50px">Meals Included</span><span class="pr" style="letter-spacing:0.81px;margin-right:-1.21px">₹4500</span></div><div class="pill" style="top:67.2px"><span class="pl" style="letter-spacing:-0.23px">EP(SG)</span><span class="pr" style="letter-spacing:0.81px;margin-right:-1.21px">₹4500</span></div><div class="pill" style="top:100.8px"><span class="pl" style="letter-spacing:0.38px">EP(TW)</span><span class="pr" style="letter-spacing:0.81px;margin-right:-1.21px">₹4500</span></div><div class="pill" style="top:134.4px"><span class="pl">EP(TR)</span><span class="pr" style="letter-spacing:0.81px;margin-right:-1.21px">₹4500</span></div><div class="pill" style="top:168px"><span class="pl" style="letter-spacing:-0.38px">EP(QD)</span><span class="pr" style="letter-spacing:0.81px;margin-right:-1.21px">₹4500</span></div></div>

</div>
<div id="asset"><span style="letter-spacing:0.56px">Asset Price History</span>
<svg style="position:absolute;left:186.500px;top:17px" width="15.500" height="15.500" viewBox="0 0 24 24" fill="none" stroke="#1c1c28" stroke-width="3.100" stroke-linecap="round" stroke-linejoin="round"><path d="m5 8.500 7 7 7-7"/></svg></div>
</div>
</body>
</html>
